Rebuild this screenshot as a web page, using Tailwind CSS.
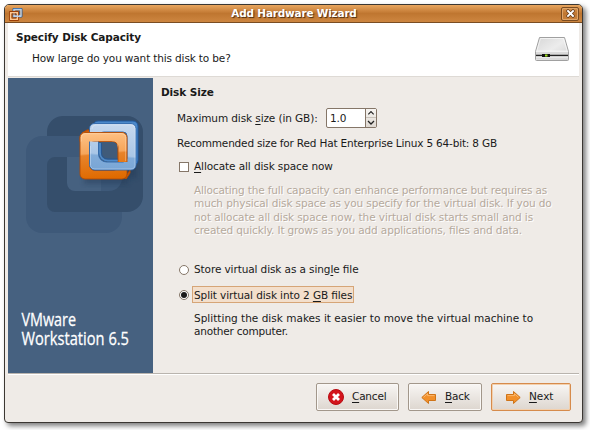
<!DOCTYPE html>
<html lang="en">
<head>
<meta charset="utf-8">
<title>Add Hardware Wizard</title>
<script src="https://cdn.jsdelivr.net/npm/@tailwindcss/browser@4"></script>
</head>
<body class="bg-white w-[590px] h-[430px] overflow-hidden pl-1 pt-1 font-['DejaVu_Sans',sans-serif] text-[10.5px] leading-[13.4px] text-[#1a1a1a] tracking-[-0.1px] [font-feature-settings:'liga']">
<div class="w-[579px] h-[419px] flex flex-col rounded-t-[5px] rounded-b-[4px] border border-[#3b3732] bg-[#efebe7] shadow-[3px_3px_5px_rgba(0,0,0,0.5)] overflow-hidden">
  <header class="h-[18px] shrink-0 flex items-center justify-between pl-1 pr-[3px] border-b border-[#7a4d22] bg-linear-to-b from-[#e9a65e] via-[#bf7630] via-50% to-[#cd8640]">
    <svg class="w-[14px] h-[13px] mt-px" viewBox="0 0 14 13" fill="none">
      <path d="M4 .5h9v8.500H4z" stroke="#2b5c94" stroke-width="1"/>
      <path d="M5 1.500h7v6.500H5z" stroke="#b4d0ee" stroke-width="1.400"/>
      <path d="M6.500 3h4v3.500h-4z" stroke="#2b5c94" stroke-width=".8"/>
      <path d="M.500 3.500h9v9h-9z" stroke="#9c3f06" stroke-width="1"/>
      <path d="M1.600 4.600h6.800v6.800H1.600z" stroke="#ffc892" stroke-width="1.400"/>
      <path d="M3 6h4v4H3z" stroke="#9c3f06" stroke-width=".8"/>
      <path d="M4.500 8.200h7.500" stroke="#b4d0ee" stroke-width="1.400"/>
    </svg>
    <h1 class="pl-1 font-bold text-white leading-none tracking-[-0.2px] [text-shadow:1px_1px_1px_#4a2b10]">Add Hardware Wizard</h1>
    <button class="w-[18px] h-[14px] flex items-center justify-center rounded-[2px] border border-[#7c4c20] shadow-[inset_0_0_0_1px_#dfa569]">
      <svg class="w-[9px] h-[9px]" viewBox="0 0 9 9" stroke-linecap="square"><path d="M2 2 7 7M7 2 2 7" stroke="#643a18" stroke-width="3.2"/><path d="M2 2 7 7M7 2 2 7" stroke="#fff" stroke-width="1.9"/></svg>
    </button>
  </header>
  <section class="h-[54px] shrink-0 mx-[3px] bg-white border-b border-[#dedad5] flex justify-between pl-2 pr-[10px]">
    <div class="pt-2">
      <h2 class="font-bold tracking-[-0.12px]">Specify Disk Capacity</h2>
      <p class="pt-2 pl-4 tracking-[-0.14px]">How large do you want this disk to be?</p>
    </div>
    <svg class="w-[34px] h-[26px] mt-[13px]" viewBox="0 0 34 26">
      <defs><linearGradient id="top" x1="0" y1="0" x2="1" y2="1"><stop stop-color="#d6d6d6"/><stop offset=".5" stop-color="#ececec"/><stop offset="1" stop-color="#cfcfcf"/></linearGradient></defs>
      <path d="M4.5 1.500h25l4 14v8q0 1-1 1H1.500q-1 0-1-1v-8z" fill="url(#top)" stroke="#a0a0a0"/>
      <path d="M5.500 2.500h23l3.700 12.500H1.800z" fill="none" stroke="#fff" stroke-opacity=".6"/>
      <path d="M1 15.500h32v8H1z" fill="#dadada"/><path d="M1 15.500h32" stroke="#f2f2f2"/>
      <path d="M1 19.500h32" stroke="#222" stroke-width="1.300"/><path d="M1 21h32" stroke="#f5f5f5"/>
      <path d="M7 18h8v3H7z" fill="#111"/><path d="M10 18.500h2.500v2H10z" fill="#9be01c"/>
    </svg>
  </section>
  <main class="h-[297px] shrink-0 mx-[3px] pt-px flex border-b border-[#b9b4ae]">
    <aside class="w-[145px] h-[295px] shrink-0 bg-[#466180]">
      <svg class="w-[145px] h-[295px]" viewBox="8 78 145 295">
        <defs>
          <linearGradient id="or" gradientUnits="userSpaceOnUse" x1="80" y1="132" x2="84" y2="180"><stop stop-color="#ffc58a"/><stop offset=".46" stop-color="#f6a55a"/><stop offset=".5" stop-color="#e8832a"/><stop offset="1" stop-color="#df6a00"/></linearGradient>
          <linearGradient id="bl" gradientUnits="userSpaceOnUse" x1="90" y1="122" x2="86" y2="170"><stop stop-color="#c6d8ee"/><stop offset=".64" stop-color="#a9c6e6"/><stop offset=".68" stop-color="#82acd9"/><stop offset="1" stop-color="#78a5d5"/></linearGradient>
          <clipPath id="over"><path d="M76 128H132V162H117.500V141.500H76z"/></clipPath>
          <clipPath id="strip"><path d="M46 136H82V157H46z"/></clipPath>
          <filter id="soft"><feGaussianBlur stdDeviation="2.500"/></filter>
        </defs>
        <path id="faint" fill="#3e5979" fill-rule="evenodd" d="M42 136H106a16 16 0 0 1 16 16V217a16 16 0 0 1-16 16H42a16 16 0 0 1-16-16V152a16 16 0 0 1 16-16zM55 157a8 8 0 0 0-8 8V203a8 8 0 0 0 8 8H93a8 8 0 0 0 8-8V165a8 8 0 0 0-8-8z"/>
        <path fill="#354e6b" fill-rule="evenodd" d="M62 116H127a16 16 0 0 1 16 16V196a16 16 0 0 1-16 16H55a8 8 0 0 1-8-8V132a16 16 0 0 1 15-16zM67 137V183a8 8 0 0 0 8 8H109a13 13 0 0 0 13-13V145a8 8 0 0 0-8-8z"/>
        <use href="#faint" clip-path="url(#strip)"/>
        <path d="M47 165a8 8 0 0 1 8-8H47z" fill="#3e5979"/>
        <path d="M84 146H137V178H128V184H84z" fill="#1f3551" opacity=".4" filter="url(#soft)"/>
        <rect x="98" y="141" width="20" height="22" fill="#405b7a"/>
        <path d="M82 133 87 130H90V134zM125 178 130 170V173L126 179z" fill="#cf5d08" stroke="#b84c00"/>
        <path fill="#4d8acb" stroke="#20579b" d="M98 121H133a5 5 0 0 1 5 5V160a5 5 0 0 1-3 5V128H93V126a5 5 0 0 1 5-5z"/>
        <path id="orange" fill="url(#or)" stroke="#b34d04" stroke-width=".9" fill-rule="evenodd" d="M85 132.500H122a5 5 0 0 1 5 5V174a5 5 0 0 1-5 5H85a5 5 0 0 1-5-5V137.500a5 5 0 0 1 5-5zM95 141.500a5.500 5.500 0 0 0-5.500 5.500V165a5.500 5.500 0 0 0 5.500 5.500H113a5 5 0 0 0 5-5V147a5.500 5.500 0 0 0-5.500-5.500z"/>
        <path fill="url(#bl)" stroke="#2f68aa" stroke-width=".9" fill-rule="evenodd" d="M95 123.500H131a5 5 0 0 1 5 5V165a5 5 0 0 1-5 5H95a5.500 5.500 0 0 1-5.500-5.500V128.500a5 5 0 0 1 5.500-5zM104 132a5.500 5.500 0 0 0-5.500 5.500V154a8 8 0 0 0 8 8H123a4 4 0 0 0 4-4V136a4 4 0 0 0-4-4z"/>
        <path d="M90.500 146V164a4 4 0 0 0 4 5H131a3.500 3.500 0 0 0 4-3.500V129a4 4 0 0 0-4-4H96a4 4 0 0 0-4 4" fill="none" stroke="#e4eefa" stroke-width=".8" opacity=".5"/>
        <path d="M100 143V153a7.500 7.500 0 0 0 7.500 7.500H118" fill="none" stroke="#4d8acb" stroke-width="1.800"/>
        <path d="M101.500 143V152a6.500 6.500 0 0 0 6.500 7H118" fill="none" stroke="#20579b" stroke-width=".8"/>
        <g clip-path="url(#over)"><use href="#orange"/><path d="M81.300 160V138a4 4 0 0 1 4-4.300H121.500a4 4 0 0 1 4.200 4V161" fill="none" stroke="#ffe1c0" stroke-width=".7" opacity=".6"/><path d="M111 141.500h7v7q-1-6-7-7z" fill="#f9b475"/></g>
        <g fill="#fff" stroke="#fff" stroke-width=".3" font-family="Open Sans, sans-serif" font-size="19" letter-spacing="0">
          <text x="21.500" y="325.600" textLength="54.500" lengthAdjust="spacingAndGlyphs">VMware</text>
          <text x="21.500" y="344.600" textLength="107.500" lengthAdjust="spacingAndGlyphs">Workstation 6.5</text>
        </g>
      </svg>
    </aside>
    <form class="flex-1 pl-2">
      <h3 class="font-bold h-[14px] mt-2">Disk Size</h3>
      <div class="ml-4 mt-2 h-5 flex items-center">
        <label class="w-[149px] pt-px whitespace-nowrap">Maximum disk <u class="underline-offset-2">s</u>ize (in GB):</label>
        <div class="w-[51px] h-5 flex rounded-[2px] border border-[#857668] bg-white">
          <span class="flex-1 pl-[3px] leading-[19px]">1.0</span>
          <div class="w-[11px] flex flex-col border-l border-[#857668] bg-linear-to-b from-[#f7f5f2] to-[#dfd9d2]">
            <svg class="w-[10px] h-[9px] border-b border-[#c9c2ba]" viewBox="0 0 10 9" fill="none" stroke="#222" stroke-width="1.300"><path d="M2 6 5 3 8 6"/></svg>
            <svg class="w-[10px] h-[9px]" viewBox="0 0 10 9" fill="none" stroke="#222" stroke-width="1.300"><path d="M2 3 5 6 8 3"/></svg>
          </div>
        </div>
      </div>
      <p class="ml-4 mt-[9px] h-[14px] whitespace-nowrap tracking-[-0.18px]">Recommended size for Red Hat Enterprise Linux 5 64-bit: 8 GB</p>
      <label class="ml-[18px] mt-[9px] h-[14px] flex items-center gap-[5px]"><span class="w-[10px] h-[10px] bg-white border border-[#857668]"></span><span><u class="underline-offset-2">A</u>llocate all disk space now</span></label>
      <p class="ml-[33px] mt-[10px] h-[54px] text-[#b5a99c] whitespace-nowrap [text-shadow:1px_1px_0_#fff]"><span class="tracking-[-0.147px]">Allocating the full capacity can enhance performance but requires as</span><br>much physical disk space as you specify for the virtual disk. If you do<br>not allocate all disk space now, the virtual disk starts small and is<br><span class="tracking-[-0.135px]">created quickly. It grows as you add applications, files and data.</span></p>
      <label class="ml-[18px] mt-[25px] h-[14px] flex items-center gap-[5px]"><span class="w-[10px] h-[10px] rounded-full bg-white border border-[#857668]"></span><span>Store virtual disk as a sing<u class="underline-offset-2">l</u>e file</span></label>
      <label class="ml-[18px] mt-[9px] h-[17px] flex items-center gap-[3px]"><span class="w-[10px] h-[10px] rounded-full bg-white border border-[#857668] flex items-center justify-center"><i class="w-[6px] h-[6px] rounded-full bg-[#1a1a1a]"></i></span><span class="w-[162px] h-[17px] px-px border border-[#d6a577] bg-[#f3dfcc] leading-[16px] whitespace-nowrap">Split virtual disk into 2 <u class="underline-offset-2">G</u>B files</span></label>
      <p class="ml-[33px] mt-[9px] whitespace-nowrap"><span class="tracking-[0.01px]">Splitting the disk makes it easier to move the virtual machine to</span><br><span class="tracking-[-0.2px]">another computer.</span></p>
    </form>
  </main>
  <footer class="flex-1 mx-[3px] border-t border-white flex items-start pt-2 pl-[308px] tracking-[-0.2px]">
    <button class="w-[83px] h-[28px] rounded-[2px] border border-[#a2978b] shadow-[inset_0_0_0_1px_#faf8f6] bg-linear-to-b from-[#f8f6f4] to-[#ddd6cf] flex items-center pl-[11px]">
      <svg class="w-4 h-4" viewBox="0 0 16 16"><circle cx="8" cy="8" r="7.500" fill="#d3141c" stroke="#b80c12"/><path d="M5 5 11 11M11 5 5 11" stroke="#fff" stroke-width="2.800"/></svg>
      <span class="ml-2"><u class="underline-offset-2">C</u>ancel</span>
    </button>
    <button class="ml-[9px] w-[74px] h-[28px] rounded-[2px] border border-[#a2978b] shadow-[inset_0_0_0_1px_#faf8f6] bg-linear-to-b from-[#f8f6f4] to-[#ddd6cf] flex items-center pl-3">
      <svg class="w-4 h-4" viewBox="0 0 16 16"><path d="M.800 8.500 7.500 2.500V5.500H14.500V11.500H7.500V14.500z" fill="#f2902a" stroke="#cf7418"/><path d="M2.500 8.300 6.500 4.800V6.600H13.500" fill="none" stroke="#fbb76c"/></svg>
      <span class="ml-2"><u class="underline-offset-2">B</u>ack</span>
    </button>
    <button class="ml-[9px] w-[80px] h-[28px] rounded-[2px] border border-[#d68b4c] shadow-[inset_0_0_0_1px_#f3d0ad] bg-linear-to-b from-[#f8f6f4] to-[#ddd6cf] flex items-center pl-[13px]">
      <svg class="w-4 h-4" viewBox="0 0 16 16"><path d="M15.200 8.500 8.500 2.500V5.500H1.500V11.500H8.500V14.500z" fill="#f2902a" stroke="#cf7418"/><path d="M2.500 6.600H9.500V4.800L13.500 8.300" fill="none" stroke="#fbb76c"/></svg>
      <span class="ml-2 tracking-normal"><u class="underline-offset-2">N</u>ext</span>
    </button>
  </footer>
</div>
</body>
</html>
